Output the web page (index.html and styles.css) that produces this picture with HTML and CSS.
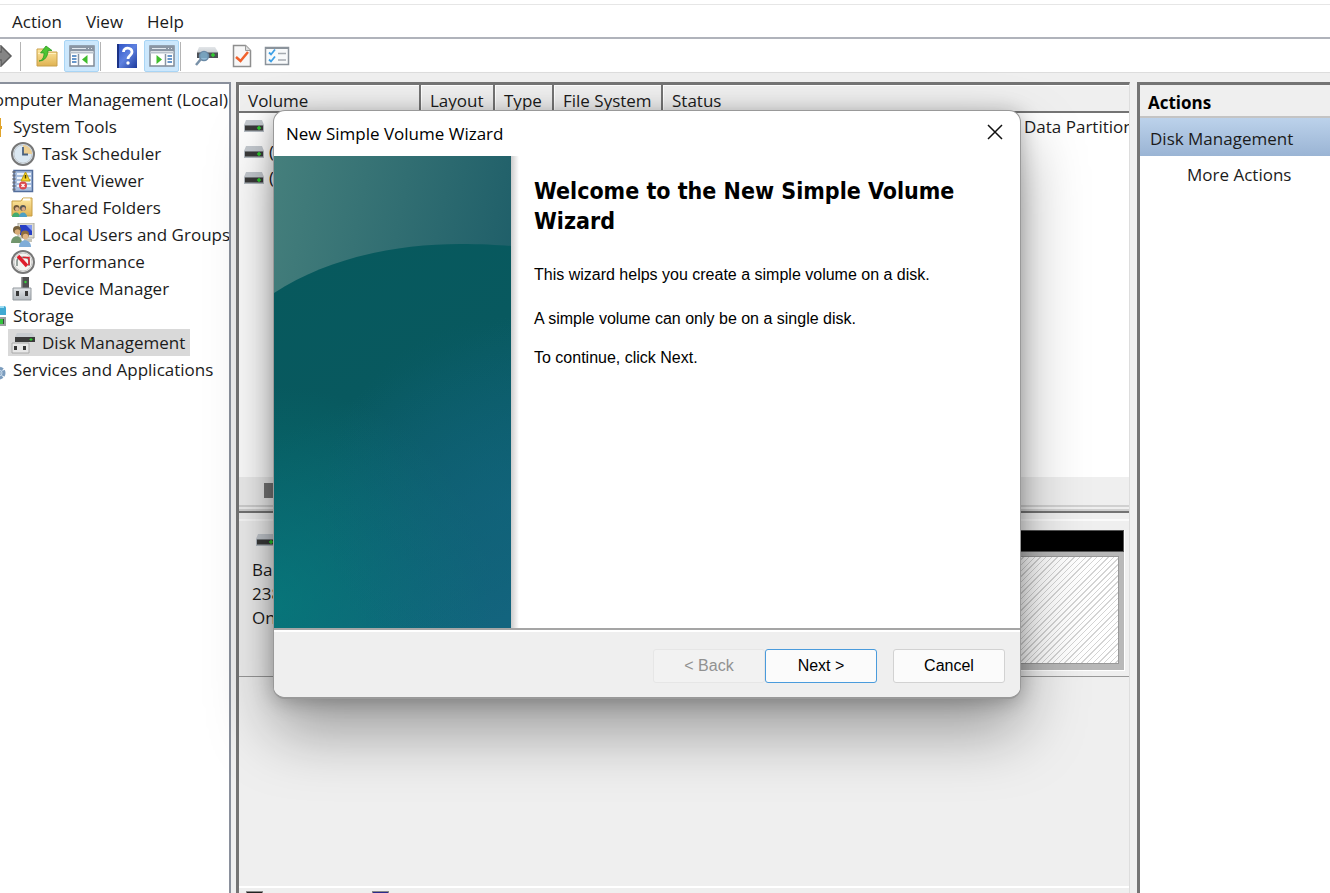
FILE: index.html
```html
<!DOCTYPE html>
<html lang="en">
<head>
<meta charset="utf-8">
<title>Computer Management</title>
<link rel="stylesheet" href="styles.css">
</head>
<body>
<svg class="defs" aria-hidden="true">
  <defs>
    <linearGradient id="gold" x2="0" y2="1"><stop stop-color="#ffe9a2"/><stop offset="1" stop-color="#dfb252"/></linearGradient>
    <linearGradient id="steel" x2="0" y2="1"><stop stop-color="#e3e6e9"/><stop offset="1" stop-color="#b3b9be"/></linearGradient>
    <linearGradient id="book" x2="1" y2="1"><stop stop-color="#2c50c4"/><stop offset=".5" stop-color="#5f82e0"/><stop offset="1" stop-color="#1c3a9c"/></linearGradient>
    <symbol id="drive" viewBox="0 0 20 12">
      <path d="M2 0H18L20 5V12H0V5Z" fill="#c5cad0"/><path d="M0 5H20V12H0Z" fill="#b4bbc2"/>
      <path d="M1 5.500H19V10.500H1Z" fill="#3a3a3a"/><path d="M15 6V10M13 8H17" stroke="#2bd12b" stroke-width="1.500"/>
    </symbol>
  </defs>
</svg>
<div class="app">
  <nav class="menubar" aria-label="Main menu">
    <button type="button">Action</button><button type="button">View</button><button type="button">Help</button>
  </nav>
  <div class="toolbar" role="toolbar" aria-label="Tools">
    <button type="button" aria-label="Forward"><svg width="22" height="22" viewBox="0 0 22 22"><path d="M1 7H10V1L20 11L10 21V15H1Z" fill="#858585" stroke="#5e5e5e" stroke-width="1.500"/></svg></button>
    <span class="sep"></span>
    <button type="button" aria-label="Up one level"><svg width="24" height="24" viewBox="0 0 24 24"><path d="M2 5H9L11 8H22V22H2Z" fill="url(#gold)" stroke="#c9a04b"/><path d="M3 9.500H21" stroke="#fff0bd"/><path d="M4 17C8 16 9 13 9 9H5.500L11 2L17 6.500H13C13 12 10 17 4 17Z" fill="#4cc433" stroke="#2b9a20" stroke-width=".8"/></svg></button>
    <button type="button" class="on" aria-label="Console tree" aria-pressed="true"><svg width="26" height="22" viewBox="0 0 26 22"><path d="M1 1H25V21H1Z" fill="#fff" stroke="#808a96" stroke-width="1.500"/><path d="M1 1H25V6H1Z" fill="#8a95a3"/><path d="M3 3.500H17M19 3.500H20M22 3.500H23" stroke="#e3e9ef"/><path d="M1 7.500H25" stroke="#b9c2cc" stroke-width="2"/><path d="M9.500 9V21" stroke="#8a95a3" stroke-width="1.500"/><path d="M3 11H7.500M3 14H7.500M3 17H7.500" stroke="#3975b9" stroke-width="1.500"/><path d="M18.500 10V19L13 14.500Z" fill="#40bd2d"/></svg></button>
    <span class="sep"></span>
    <button type="button" aria-label="Help topics"><svg width="20" height="24" viewBox="0 0 20 24"><path d="M0 0H20V24H0Z" fill="url(#book)"/><path d="M1 0V24" stroke="#1a3285" stroke-width="2"/><path d="M6.500 8C6.500 2.500 15 3 15 8C15 11.500 11 11.500 11 15" fill="none" stroke="#fff" stroke-width="2.800"/><circle cx="11" cy="19" r="1.700" fill="#fff"/></svg></button>
    <button type="button" class="on" aria-label="Action pane" aria-pressed="true"><svg width="26" height="22" viewBox="0 0 26 22"><path d="M1 1H25V21H1Z" fill="#fff" stroke="#808a96" stroke-width="1.500"/><path d="M1 1H25V6H1Z" fill="#8a95a3"/><path d="M3 3.500H17M19 3.500H20M22 3.500H23" stroke="#e3e9ef"/><path d="M1 7.500H25" stroke="#b9c2cc" stroke-width="2"/><path d="M16.500 9V21" stroke="#8a95a3" stroke-width="1.500"/><path d="M18.500 11H23M18.500 14H23M18.500 17H23" stroke="#3975b9" stroke-width="1.500"/><path d="M7.500 10V19L13 14.500Z" fill="#40bd2d"/></svg></button>
    <span class="sep"></span>
    <button type="button" aria-label="Disk view"><svg width="24" height="22" viewBox="0 0 24 22"><path d="M4 2H20L23 7V13H2V7Z" fill="url(#steel)"/><path d="M2 7.500H23V13H2Z" fill="#4c5055"/><path d="M18 8V12M16 10H20" stroke="#2fd12f" stroke-width="1.500"/><circle cx="9" cy="11" r="4.500" fill="#7fb0d0" fill-opacity=".85" stroke="#6a8aa6" stroke-width="1.500"/><path d="M6 14L1 20" stroke="#7891a8" stroke-width="2.500"/></svg></button>
    <button type="button" aria-label="Check"><svg width="20" height="24" viewBox="0 0 20 24"><path d="M1.500 1.500H13.500L18.500 6.500V22.500H1.500Z" fill="#f7f7f7" stroke="#8e8e8e" stroke-width="1.500"/><path d="M13.500 1.500V6.500H18.500" fill="#ddd" stroke="#9a9a9a"/><path d="M4 13L8.500 17L16 8" fill="none" stroke="#f0602b" stroke-width="2.500"/></svg></button>
    <button type="button" aria-label="Properties"><svg width="26" height="20" viewBox="0 0 26 20"><path d="M1.500 1.500H24.500V18.500H1.500Z" fill="#f8fafb" stroke="#8b939b" stroke-width="1.500"/><path d="M1 2H25" stroke="#8b939b" stroke-width="2"/><path d="M5 6.500L7 8.500L11 3.500M5 13.500L7 15.500L11 10.500" fill="none" stroke="#3d9fe5" stroke-width="1.800"/><path d="M14 7.500H22M14 14H22" stroke="#a5abb1" stroke-width="1.500"/></svg></button>
  </div>

  <div class="workspace">
    <aside class="tree-pane">
      <ul class="tree">
        <li class="root"><span class="node">Computer Management (Local)</span></li>
        <li class="branch"><span class="node"><svg viewBox="0 0 24 24"><path d="M4 3H19V11H20V14H19V22H4Z" fill="#e0a32a"/></svg>System Tools</span></li>
        <li><span class="node"><svg viewBox="0 0 24 24"><circle cx="12" cy="12" r="11" fill="#e3edf4" stroke="#777" stroke-width="2"/><circle cx="12" cy="12" r="9" fill="#dbe8f2" stroke="#c2c9cf"/><path d="M12 12V3A9 9 0 0 1 21 12Z" fill="#edcf92"/><path d="M12 5V12.500H17" fill="none" stroke="#4a6280" stroke-width="1.800"/></svg>Task Scheduler</span></li>
        <li><span class="node"><svg viewBox="0 0 24 24"><path d="M3 1.500H21.500V22.500H3Z" fill="#a8bfdf" stroke="#536e9c" stroke-width="1.500"/><path d="M6 5H20M6 9H20M6 13H20M6 17H20" stroke="#edf3fb" stroke-width="2"/><path d="M3 2V22" stroke="#6b7280" stroke-width="3" stroke-dasharray="2 1.500"/><path d="M14.500 3L19 12H10Z" fill="#f7d424" stroke="#b99b12"/><path d="M14.500 6V9.500" stroke="#4a4100" stroke-width="1.500"/><circle cx="12" cy="16.500" r="4" fill="#db474d"/><path d="M10.500 15L13.500 18M13.500 15L10.500 18" stroke="#fff" stroke-width="1.300"/></svg>Event Viewer</span></li>
        <li><span class="node"><svg viewBox="0 0 24 24"><path d="M1 5H10L12 2H21V20H1Z" fill="url(#gold)" stroke="#c69d43"/><path d="M12 3.500H19" stroke="#fff" stroke-width="2"/><circle cx="5.500" cy="12" r="3" fill="#70583a"/><circle cx="12" cy="12" r="3" fill="#565656"/><circle cx="6" cy="13" r="2" fill="#e1b48a"/><circle cx="12.500" cy="13" r="2" fill="#dba981"/><path d="M1 21C1 15 9 15 9 21Z" fill="#43ab70"/><path d="M8 21C8 15 16 15 16 21Z" fill="#4e9fc4"/></svg>Shared Folders</span></li>
        <li><span class="node"><svg viewBox="0 0 24 24"><path d="M7 0H23V15H7Z" fill="#dddbd1" stroke="#aaa99f"/><path d="M9 2H21V12H9Z" fill="#283fc5"/><path d="M15 2H21V8Z" fill="#829af2"/><path d="M13 16H21V19H13Z" fill="#c6c3b6"/><circle cx="6" cy="7" r="4" fill="#75613e"/><circle cx="6.500" cy="9" r="2.800" fill="#d9ad78"/><path d="M0 20C0 11 11 11 11 20Z" fill="#71966d"/><circle cx="14" cy="11.500" r="4" fill="#8f6d3e"/><circle cx="14.500" cy="13.500" r="2.800" fill="#e0b583"/><path d="M8 24C8 15 20 15 20 24Z" fill="#80add8"/></svg>Local Users and Groups</span></li>
        <li><span class="node"><svg viewBox="0 0 24 24"><circle cx="12" cy="12" r="11" fill="#f4f4f1" stroke="#777" stroke-width="2"/><circle cx="12" cy="12" r="9" fill="none" stroke="#c8c8c8"/><path d="M6 16V11C6 6 18 6 18 11V16" fill="none" stroke="#7d8c87" stroke-width="1.500"/><path d="M7 6L16 16" stroke="#df1d2b" stroke-width="3.500"/><path d="M12 7.500H18V15" fill="none" stroke="#df1d2b" stroke-width="1.500"/></svg>Performance</span></li>
        <li><span class="node"><svg viewBox="0 0 24 24"><path d="M10 0H18V11H10Z" fill="#505050"/><path d="M10 0H11.500V11H10Z" fill="#999"/><circle cx="14.500" cy="5" r="1.200" fill="#38d43c"/><path d="M2 11H20V23H2Z" fill="url(#steel)" stroke="#93999e"/><path d="M5 14H8V19H5ZM14 14H17V19H14Z" fill="#383838"/></svg>Device Manager</span></li>
        <li class="branch"><span class="node"><svg viewBox="0 0 24 24"><path d="M4 2H22Q24 2 24 4V11H4Z" fill="#41a9d2"/><path d="M4 3H22" stroke="#9cdcf2" stroke-width="2"/><path d="M4 13H24V22H4Z" fill="#9ba0a1"/><path d="M14 15H22V20H14Z" fill="#3c4440"/><path d="M18 15H21V20H18Z" fill="#32c43c"/></svg>Storage</span></li>
        <li><span class="node selected"><svg viewBox="0 0 24 24"><path d="M6 2H21L24 6V11H4V6Z" fill="#c8ccd0"/><path d="M4 6H24V11H4Z" fill="#3b3b3b"/><path d="M20 7V10M18.500 8.500H21.500" stroke="#30d030"/><path d="M1 12H18V22H1Z" fill="#e7e7e7" stroke="#aaa"/><path d="M3 15H6V19H3ZM12 15H15V19H12Z" fill="#353535"/></svg>Disk Management</span></li>
        <li class="branch"><span class="node"><svg viewBox="0 0 24 24"><circle cx="17" cy="15" r="5" fill="#c1d5e8" stroke="#7b9cbd" stroke-width="3" stroke-dasharray="3 1"/><circle cx="17" cy="15" r="2" fill="#fff" stroke="#7b9cbd"/></svg>Services and Applications</span></li>
      </ul>
    </aside>

    <main class="disk-pane">
      <section class="volumes">
        <table>
          <colgroup><col class="c-volume"><col class="c-layout"><col class="c-type"><col class="c-fs"><col></colgroup>
          <thead><tr><th scope="col">Volume</th><th scope="col">Layout</th><th scope="col">Type</th><th scope="col">File System</th><th scope="col">Status</th></tr></thead>
          <tbody>
            <tr><td><span class="vol"><svg><use href="#drive"/></svg></span></td><td></td><td></td><td></td><td class="status">Data Partition</td></tr>
            <tr><td><span class="vol"><svg><use href="#drive"/></svg>(</span></td><td></td><td></td><td></td><td></td></tr>
            <tr><td><span class="vol"><svg><use href="#drive"/></svg>(</span></td><td></td><td></td><td></td><td></td></tr>
          </tbody>
        </table>
        <div class="scrollbar"><span class="thumb"></span></div>
      </section>
      <section class="disks">
        <div class="disk">
          <div class="disk-info"><svg><use href="#drive"/></svg><span>Basic</span><span>238</span><span>Online</span></div>
          <div class="partition"><div class="bar"></div><div class="frame"><div class="hatch"></div></div></div>
        </div>
        <div class="legend"><span class="swatch"></span><span class="swatch primary"></span></div>
      </section>
    </main>

    <aside class="actions">
      <h2>Actions</h2>
      <h3>Disk Management</h3>
      <button type="button">More Actions</button>
    </aside>
  </div>

  <section class="dialog" role="dialog" aria-labelledby="wizard-title">
    <header>
      <span id="wizard-title">New Simple Volume Wizard</span>
      <button type="button" class="close" aria-label="Close"><svg width="16" height="16" viewBox="0 0 16 16"><path d="M1 1L15 15M15 1L1 15" stroke="#111" stroke-width="1.500"/></svg></button>
    </header>
    <div class="page">
      <svg class="banner" viewBox="0 0 237 472" preserveAspectRatio="none" aria-hidden="true">
        <defs>
          <linearGradient id="sky" x2="1" y2=".4"><stop stop-color="#457f7c"/><stop offset="1" stop-color="#1d5d68"/></linearGradient>
          <linearGradient id="sea" gradientUnits="userSpaceOnUse" x1="20" y1="110" x2="210" y2="472"><stop stop-color="#07595d"/><stop offset=".35" stop-color="#08595f"/><stop offset="1" stop-color="#13647e"/></linearGradient>
          <radialGradient id="glow" gradientUnits="userSpaceOnUse" cx="0" cy="450" r="220"><stop stop-color="#057c7c" stop-opacity=".75"/><stop offset="1" stop-color="#057c7c" stop-opacity="0"/></radialGradient>
          <radialGradient id="blue" gradientUnits="userSpaceOnUse" cx="237" cy="350" r="190"><stop stop-color="#12647e" stop-opacity=".6"/><stop offset="1" stop-color="#12647e" stop-opacity="0"/></radialGradient>
        </defs>
        <path d="M0 0H237V472H0Z" fill="url(#sky)"/>
        <path d="M0 137C55 101 125 88 186 88C208 88 224 89 237 90V472H0Z" fill="url(#sea)"/>
        <path d="M0 180H237V472H0Z" fill="url(#glow)"/>
        <path d="M0 130H237V472H0Z" fill="url(#blue)"/>
      </svg>
      <div class="copy">
        <h1>Welcome to the New Simple Volume Wizard</h1>
        <p>This wizard helps you create a simple volume on a disk.</p>
        <p>A simple volume can only be on a single disk.</p>
        <p>To continue, click Next.</p>
      </div>
    </div>
    <footer>
      <button type="button" disabled>&lt; Back</button>
      <button type="button" class="default">Next &gt;</button>
      <button type="button" class="cancel">Cancel</button>
    </footer>
  </section>
</div>
</body>
</html>
```
FILE: styles.css
```css
* { box-sizing: border-box; }
body { margin: 0; background: #fff; color: #1b1b1b; font: 17px/24px "Open Sans", "Noto Sans", sans-serif; }
button { font: inherit; color: inherit; border: 0; background: none; padding: 0; }
h1, h2, h3, p, ul { margin: 0; padding: 0; }
svg { display: block; flex: none; }
.defs { position: absolute; width: 0; height: 0; }
.app { position: relative; height: 100vh; display: flex; flex-direction: column; overflow: hidden; }

.menubar { margin-top: 4px; height: 35px; display: flex; align-items: center; gap: 24px; padding: 2px 0 0 12px; border-top: 1px solid #e6e6e6; border-bottom: 2px solid #b0b3bb; }
.toolbar { height: 34px; padding-top: 1px; display: flex; align-items: center; margin-left: -16px; border-bottom: 1px solid #ddd; }
.toolbar button { width: 35px; height: 32px; display: grid; place-items: center; border-radius: 2px; }
.toolbar .on { background: #cce7fc; border: 1px solid #a9d5f5; }
.sep { width: 1px; height: 29px; margin: 0 8px 0 1px; background: #b4b4b4; flex: none; }

.workspace { flex: 1; min-height: 0; padding-top: 9px; display: flex; background: #efefef; }
.tree-pane { width: 231px; flex: none; background: #fff; border-top: 2px solid #8a909c; border-right: 2px solid #8a909c; overflow: hidden; padding-top: 2px; }
.tree { list-style: none; margin-left: -40px; white-space: nowrap; }
.tree li { height: 27px; padding-left: 48px; display: flex; }
.tree .branch { padding-left: 19px; }
.tree .root { padding-left: 20px; }
.node { display: flex; align-items: center; gap: 7px; padding: 0 5px 0 3px; }
.node svg { width: 24px; height: 24px; }
.selected { background: #d9d9d9; }

.disk-pane { flex: 1; min-width: 0; margin: 0 7px 0 5px; border: solid #747474; border-width: 3px 0 0 3px; border-right: 1px solid #ddd; display: grid; grid-template-rows: minmax(0, 53fr) minmax(0, 47fr); overflow: hidden; }
.volumes { display: flex; flex-direction: column; min-width: 0; background: #fff; border-bottom: 2px solid #747474; overflow: hidden; }
table { width: 100%; table-layout: fixed; border-collapse: separate; border-spacing: 0; }
.c-volume { width: 182px; }
.c-layout { width: 74px; }
.c-type { width: 59px; }
.c-fs { width: 109px; }
th { height: 28px; padding: 6px 0 0 9px; text-align: left; font-weight: 400; line-height: 20px; background: #efefef; border: solid #747474; border-width: 0 2px 2px 0; box-shadow: inset 1px 1px #fff; }
th:last-child { border-right: 0; }
td { height: 26px; padding: 0 0 0 5px; line-height: 24px; white-space: nowrap; }
.vol { display: flex; align-items: center; gap: 5px; }
.vol svg { width: 20px; height: 12px; }
td.status { padding: 2px 0 0 361px; }
.scrollbar { margin-top: auto; height: 34px; padding: 6px 0 0 25px; background: #efefef; border-bottom: 6px double #d0d0d0; }
.thumb { display: block; width: 480px; height: 15px; background: #777; }

.disks { display: flex; flex-direction: column; min-height: 0; background: #efefef; }
.disk { margin-top: 6px; padding: 9px 4px 5px 0; display: flex; border-top: 2px solid #fafafa; border-bottom: 1px solid #999; }
.disk-info { width: 140px; min-height: 141px; padding: 4px 0 0 13px; display: flex; flex-direction: column; }
.disk-info svg { width: 20px; height: 12px; margin: 0 0 12px 4px; }
.partition { flex: 1; display: flex; flex-direction: column; border-right: 1px solid #fff; border-bottom: 1px solid #fff; }
.bar { height: 22px; background: #000; border: 1px solid #555; }
.frame { flex: 1; display: flex; padding: 4px 5px 6px; background: #b8b8b8; }
.hatch { flex: 1; border: 1px solid #999; background: repeating-linear-gradient(135deg, #fff 0 3px, #d4d4d4 3px 4px); }
.legend { margin-top: auto; height: 7px; padding: 3px 0 0 7px; display: flex; gap: 109px; border-top: 2px solid #fff; overflow: hidden; }
.swatch { width: 17px; height: 17px; background: #222; border: 1px solid #888; }
.primary { background: #2b2b8c; }

.actions { width: 193px; flex: none; background: #fff; border: solid #747474; border-width: 3px 0 0 3px; }
.actions h2 { height: 33px; padding: 6px 0 0 8px; font-size: 17px; font-weight: 700; line-height: 24px; color: #000; background: #efefef; border-bottom: 2px solid #c4c4c4; }
.actions h3 { height: 38px; padding: 0 0 0 10px; font-size: 17px; font-weight: 400; line-height: 42px; background: linear-gradient(#bcd2eb, #9ab4d4); }
.actions button { padding: 7px 0 0 47px; }

.dialog { position: absolute; left: 273px; top: 110px; width: 748px; background: #fff; border: 1px solid #999; border-bottom-width: 2px; border-radius: 12px; box-shadow: 0 32px 64px rgba(0, 0, 0, .36), 0 2px 20px rgba(0, 0, 0, .25); overflow: hidden; color: #000; }
.dialog header { height: 45px; padding: 0 12px; display: flex; align-items: center; justify-content: space-between; }
.close { width: 26px; height: 24px; display: grid; place-items: start center; padding-top: 2px; }
.page { display: flex; }
.banner { width: 237px; height: 472px; }
.copy { flex: 1; padding: 20px 20px 0 23px; font: 16px/24px "Liberation Sans", Arial, sans-serif; background: linear-gradient(90deg, #ccc, #fff 8px); }
.copy h1 { margin-bottom: 27px; font: 700 23px/30px "DejaVu Sans Condensed", "Open Sans", sans-serif; }
.copy p { margin-bottom: 15px; }
.copy h1 + p { margin-bottom: 20px; }
.dialog footer { padding: 19px 15px 14px; display: flex; justify-content: flex-end; background: #efefef; border-top: 2px solid #a5a5a5; box-shadow: inset 0 2px #fff; }
.dialog footer button { width: 112px; height: 34px; font: 16px/20px "Liberation Sans", Arial, sans-serif; background: #fbfbfb; border: 1px solid #d2d2d2; border-radius: 3px; }
.dialog footer button:disabled { color: #919191; background: #f2f2f2; border-color: #e6e6e6; }
.dialog footer .default { border-color: #4a9bdc; }
.dialog footer .cancel { margin-left: 16px; }
```
